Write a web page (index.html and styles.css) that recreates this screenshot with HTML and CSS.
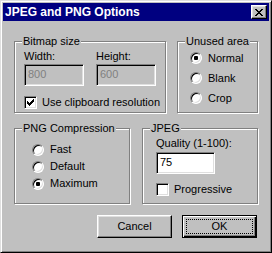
FILE: index.html
```html
<!DOCTYPE html>
<html lang="en">
<head>
    <meta charset="UTF-8">
    <title>JPEG and PNG Options</title>
    <link rel="stylesheet" href="styles.css">
</head>
<body>
    <div class="dialog">
        <div class="titlebar">
            <span class="title">JPEG and PNG Options</span>
            <button class="close">
                <svg width="8" height="7" viewBox="0 0 8 7" shape-rendering="crispEdges">
                    <path d="M0 0h2v1h-2z M6 0h2v1h-2z M1 1h2v1h-2z M5 1h2v1h-2z M2 2h4v1h-4z M3 3h2v1h-2z M2 4h4v1h-4z M1 5h2v1h-2z M5 5h2v1h-2z M0 6h2v1h-2z M6 6h2v1h-2z" fill="#000"/>
                </svg>
            </button>
        </div>

        <div class="content">
            <div class="row row-top">
                <div class="group bitmap">
                    <span class="legend">Bitmap size</span>
                    <div class="fields">
                        <div class="field">
                            <span>Width:</span>
                            <div class="textbox disabled">800</div>
                        </div>
                        <div class="field">
                            <span>Height:</span>
                            <div class="textbox disabled">600</div>
                        </div>
                    </div>
                    <div class="check-row">
                        <span class="checkbox checked">
                            <svg width="7" height="7" viewBox="0 0 7 7" shape-rendering="crispEdges">
                                <path d="M6 0h1v1h-1z M5 1h2v1h-2z M0 2h1v1h-1z M4 2h3v1h-3z M0 3h2v1h-2z M3 3h3v1h-3z M0 4h5v1h-5z M1 5h3v1h-3z M2 6h1v1h-1z" fill="#000"/>
                            </svg>
                        </span>
                        <span>Use clipboard resolution</span>
                    </div>
                </div>

                <div class="group unused">
                    <span class="legend">Unused area</span>
                    <div class="radio-row"><span class="radio checked"></span><span>Normal</span></div>
                    <div class="radio-row"><span class="radio"></span><span>Blank</span></div>
                    <div class="radio-row"><span class="radio"></span><span>Crop</span></div>
                </div>
            </div>

            <div class="row row-bottom">
                <div class="group png">
                    <span class="legend">PNG Compression</span>
                    <div class="radio-row"><span class="radio"></span><span>Fast</span></div>
                    <div class="radio-row"><span class="radio"></span><span>Default</span></div>
                    <div class="radio-row"><span class="radio checked"></span><span>Maximum</span></div>
                </div>

                <div class="group jpeg">
                    <span class="legend">JPEG</span>
                    <span>Quality (1-100):</span>
                    <div class="textbox quality">75</div>
                    <div class="check-row">
                        <span class="checkbox"></span>
                        <span>Progressive</span>
                    </div>
                </div>
            </div>

            <div class="buttons">
                <button class="btn">Cancel</button>
                <button class="btn default"><span class="focus">OK</span></button>
            </div>
        </div>
    </div>
</body>
</html>
```

FILE: styles.css
```css
* {
    box-sizing: border-box;
}

body {
    margin: 0;
    font-family: 'Liberation Sans', Arial, sans-serif;
    font-size: 11px;
    line-height: 13px;
    color: #000;
    background: #c0c0c0;
}

.dialog {
    width: 272px;
    height: 253px;
    background: #c0c0c0;
    border: 1px solid;
    border-color: #dfdfdf #000 #000 #dfdfdf;
    box-shadow: inset 1px 1px #fff, inset -1px -1px #808080;
    padding: 2px;
}

.titlebar {
    height: 18px;
    background: #000080;
    display: flex;
    align-items: center;
    justify-content: space-between;
    padding: 0 2px 0 2px;
}

.title {
    color: #fff;
    font-weight: bold;
    font-size: 12px;
}

.close {
    width: 16px;
    height: 14px;
    padding: 0;
    background: #c0c0c0;
    border: 1px solid;
    border-color: #fff #000 #000 #fff;
    box-shadow: inset -1px -1px #808080, inset 1px 1px #dfdfdf;
    display: flex;
    align-items: center;
    justify-content: center;
}

.close svg {
    display: block;
    margin: 0 0 0 -1px;
}

.content {
    padding: 0 11px;
}

.row {
    display: grid;
}

.row-top {
    grid-template-columns: 152px 81px;
    column-gap: 11px;
    margin-top: 20px;
    height: 72px;
}

.row-bottom {
    grid-template-columns: 116px 116px;
    column-gap: 12px;
    margin-top: 15px;
    height: 76px;
}

/* etched group box */
.group {
    position: relative;
    border: 1px solid #808080;
    box-shadow: inset 1px 1px #fff, 1px 1px #fff;
}

.legend {
    position: absolute;
    top: -7px;
    left: 7px;
    padding: 0 1px;
    background: #c0c0c0;
}

.bitmap {
    padding: 8px 0 0 9px;
}

.fields {
    display: flex;
    gap: 12px;
}

.field {
    display: flex;
    flex-direction: column;
    gap: 1px;
}

.textbox {
    width: 60px;
    height: 22px;
    padding: 3px 0 0 3px;
    background: #fff;
    border: 1px solid;
    border-color: #808080 #fff #fff #808080;
    box-shadow: inset 1px 1px #000, inset -1px -1px #dfdfdf;
}

.textbox.disabled {
    background: #c0c0c0;
    color: #808080;
}

.check-row {
    display: flex;
    align-items: center;
    gap: 5px;
    margin-top: 10px;
}

.checkbox {
    width: 13px;
    height: 13px;
    background: #fff;
    border: 1px solid;
    border-color: #808080 #fff #fff #808080;
    box-shadow: inset 1px 1px #000, inset -1px -1px #dfdfdf;
    display: flex;
    align-items: center;
    justify-content: center;
}

.checkbox svg {
    display: block;
}

.unused {
    padding: 6px 0 0 12px;
}

.radio-row {
    display: flex;
    align-items: center;
    gap: 6px;
    height: 20px;
}

.radio {
    position: relative;
    width: 12px;
    height: 12px;
    border-radius: 50%;
    background: #fff;
    border: 1px solid;
    border-color: #808080 #fff #fff #808080;
    box-shadow: inset 1px 1px #000, inset -1px -1px #dfdfdf;
}

.radio.checked::after {
    content: "";
    position: absolute;
    left: 3px;
    top: 3px;
    width: 4px;
    height: 4px;
    border-radius: 1px;
    background: #000;
}

.png {
    padding: 12px 0 0 17px;
}

.png .radio-row {
    height: 17px;
}

.jpeg {
    padding: 8px 0 0 13px;
    display: flex;
    flex-direction: column;
    align-items: flex-start;
}

.quality {
    margin-top: 2px;
    width: 59px;
}

.jpeg .check-row {
    margin-top: 9px;
}

.buttons {
    display: flex;
    justify-content: flex-end;
    gap: 10px;
    margin-top: 11px;
    padding-right: 1px;
}

.btn {
    width: 75px;
    height: 23px;
    padding: 0;
    font: inherit;
    color: #000;
    background: #c0c0c0;
    border: 1px solid;
    border-color: #fff #000 #000 #fff;
    box-shadow: inset -1px -1px #808080, inset 1px 1px #dfdfdf;
}

.btn.default {
    border: 1px solid #000;
    box-shadow: inset 1px 1px #fff, inset -1px -1px #000, inset -2px -2px #808080;
    padding: 3px;
}

.focus {
    display: flex;
    align-items: center;
    justify-content: center;
    height: 100%;
    border: 1px dotted #000;
}
```
